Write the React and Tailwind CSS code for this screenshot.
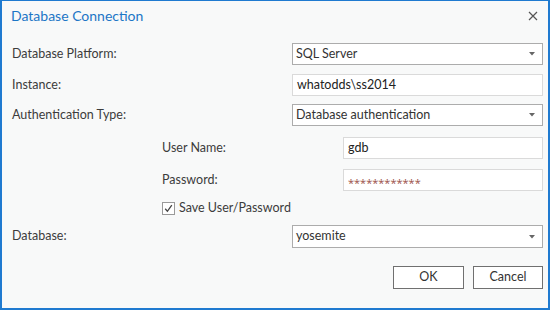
import React from "react";

function Caret() {
  return (
    <svg width="6" height="4" viewBox="0 0 6 4" className="shrink-0">
      <path d="M0 0H6L3 3.5Z" fill="#666" />
    </svg>
  );
}

function SelectBox({ value, className = "" }) {
  return (
    <div
      className={`flex items-center justify-between border border-[#acacac] bg-white pl-[3px] pr-[7px] text-[#333] ${className}`}
    >
      <span>{value}</span>
      <Caret />
    </div>
  );
}

function TextBox({ value, className = "", children }) {
  return (
    <div
      className={`flex items-center border border-[#dadada] bg-white pl-[4px] text-[#222] ${className}`}
    >
      {children || value}
    </div>
  );
}

export default function App() {
  return (
    <div
      className="w-[550px] h-[310px] bg-[#f8f9f9] border-x-2 border-b-2 border-t border-[#1f7ad0] flex flex-col text-[12.5px] text-[#3c3c3c]"
      style={{ fontFamily: "Lato, 'Open Sans', sans-serif" }}
    >
      {/* Title bar */}
      <div className="h-[29px] flex items-center justify-between pl-[9px] pr-[10px]">
        <span className="text-[14px] text-[#1c76c6]">Database Connection</span>
        <svg width="10" height="10" viewBox="0 0 10 10">
          <path d="M1 1L9 9M9 1L1 9" stroke="#555" strokeWidth="1.2" />
        </svg>
      </div>

      <div className="flex flex-col pl-[10px] pr-[5px] mt-[13px]">
        <div className="flex items-center h-[22px]">
          <span className="w-[280px]">Database Platform:</span>
          <SelectBox value="SQL Server" className="flex-1 h-[22px]" />
        </div>
        <div className="flex items-center h-[22px] mt-[9px]">
          <span className="w-[280px]">Instance:</span>
          <TextBox value="whatodds\ss2014" className="flex-1 h-[22px]" />
        </div>
        <div className="flex items-center h-[22px] mt-[8px]">
          <span className="w-[280px]">Authentication Type:</span>
          <SelectBox value="Database authentication" className="flex-1 h-[22px]" />
        </div>

        <div className="flex items-center h-[22px] mt-[11px] pl-[150px]">
          <span className="w-[181px]">User Name:</span>
          <TextBox value="gdb" className="flex-1 h-[22px]" />
        </div>
        <div className="flex items-center h-[22px] mt-[10px] pl-[150px]">
          <span className="w-[181px]">Password:</span>
          <TextBox className="flex-1 h-[22px]">
            <span className="font-['Open_Sans'] text-[#9a5048] text-[11px] leading-none mt-[5px]">
              ************
            </span>
          </TextBox>
        </div>
        <div className="flex items-center h-[14px] mt-[10px] pl-[150px]">
          <div className="w-[13px] h-[13px] border border-[#9a9a9a] bg-white flex items-center justify-center">
            <svg width="9" height="9" viewBox="0 0 9 9">
              <path d="M1.2 4.8L3.4 7.3L7.8 1.2" stroke="#444" strokeWidth="1.3" fill="none" />
            </svg>
          </div>
          <span className="ml-[4px]">Save User/Password</span>
        </div>

        <div className="flex items-center h-[23px] mt-[10px]">
          <span className="w-[280px]">Database:</span>
          <SelectBox value="yosemite" className="flex-1 h-[23px]" />
        </div>

        <div className="flex justify-end gap-[9px] mt-[18px]">
          <button className="w-[71px] h-[23px] border border-[#707070] bg-white text-[#333]">OK</button>
          <button className="w-[70px] h-[23px] border border-[#707070] bg-white text-[#333]">Cancel</button>
        </div>
      </div>
    </div>
  );
}
